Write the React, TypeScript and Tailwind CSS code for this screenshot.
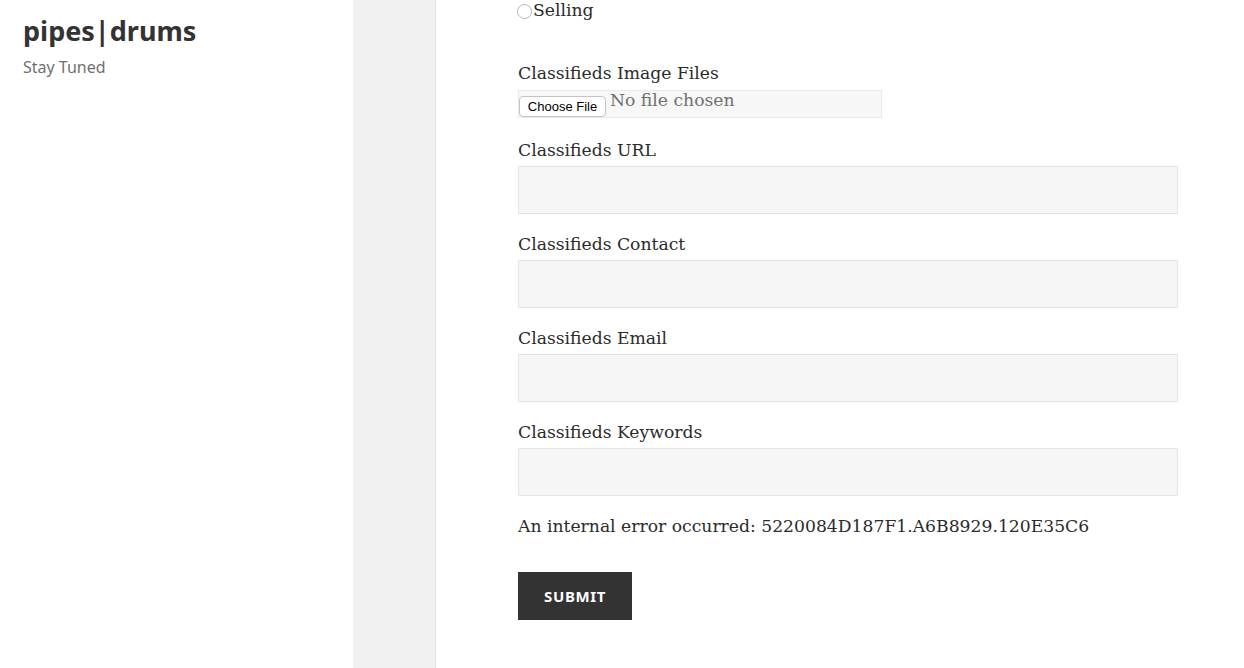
export default function App() {
  const fields = ['Classifieds URL', 'Classifieds Contact', 'Classifieds Email', 'Classifieds Keywords'];

  return (
    <div className="flex h-[668px] w-full overflow-hidden bg-[#f1f1f1]">
      {/* sidebar */}
      <aside className="w-[353px] shrink-0 bg-white px-[23px] pt-[13px] font-['Noto_Sans',sans-serif]">
        <h1 className="text-[27px] font-bold leading-[36px] text-[#333]">pipes|drums</h1>
        <p className="mt-[6px] text-[16px] leading-[24px] text-[#707070]">Stay Tuned</p>
      </aside>

      <div className="w-[82px] shrink-0" />

      {/* content */}
      <main className="flex-1 border-l border-[#e4e4e4] bg-white pl-[82px] font-['DejaVu_Serif',serif] text-[17.2px] text-[#2b2b2b]">
        <div className="-mt-[5px] flex h-[32px] items-center">
          <span className="ml-[-1px] mt-[1px] h-[15px] w-[15px] rounded-full border border-[#b5b5b5] bg-white" />
          <span className="ml-[1px]">Selling</span>
        </div>

        <div className="mt-[30px] w-[660px]">
          <label className="block h-[32px] leading-[32px]">Classifieds Image Files</label>
          <div className="mt-[1px] flex h-[28px] w-[364px] items-start border border-[#eaeaea] bg-[#f7f7f7]">
            <span className="mt-[5px] flex h-[21px] w-[87px] items-center justify-center rounded-[4px] border border-[#c4c4c4] bg-white font-['Liberation_Sans',sans-serif] text-[13px] text-black">
              Choose File
            </span>
            <span className="ml-[4px] -mt-[3px] leading-[24px] text-[#707070]">No file chosen</span>
          </div>

          <div className="mt-[16px] flex flex-col gap-[14px]">
            {fields.map((f) => (
              <div key={f}>
                <label className="block h-[32px] leading-[32px]">{f}</label>
                <div className="h-[48px] w-[660px] border border-[#e4e4e4] bg-[#f6f6f6]" />
              </div>
            ))}
          </div>

          <p className="mt-[14px] h-[32px] leading-[32px]">An internal error occurred: 5220084D187F1.A6B8929.120E35C6</p>

          <button className="mt-[30px] flex h-[48px] w-[114px] items-center justify-center bg-[#333] font-['Noto_Sans',sans-serif] text-[15px] font-bold uppercase tracking-[0.04em] text-white">
            Submit
          </button>
        </div>
      </main>
    </div>
  );
}
